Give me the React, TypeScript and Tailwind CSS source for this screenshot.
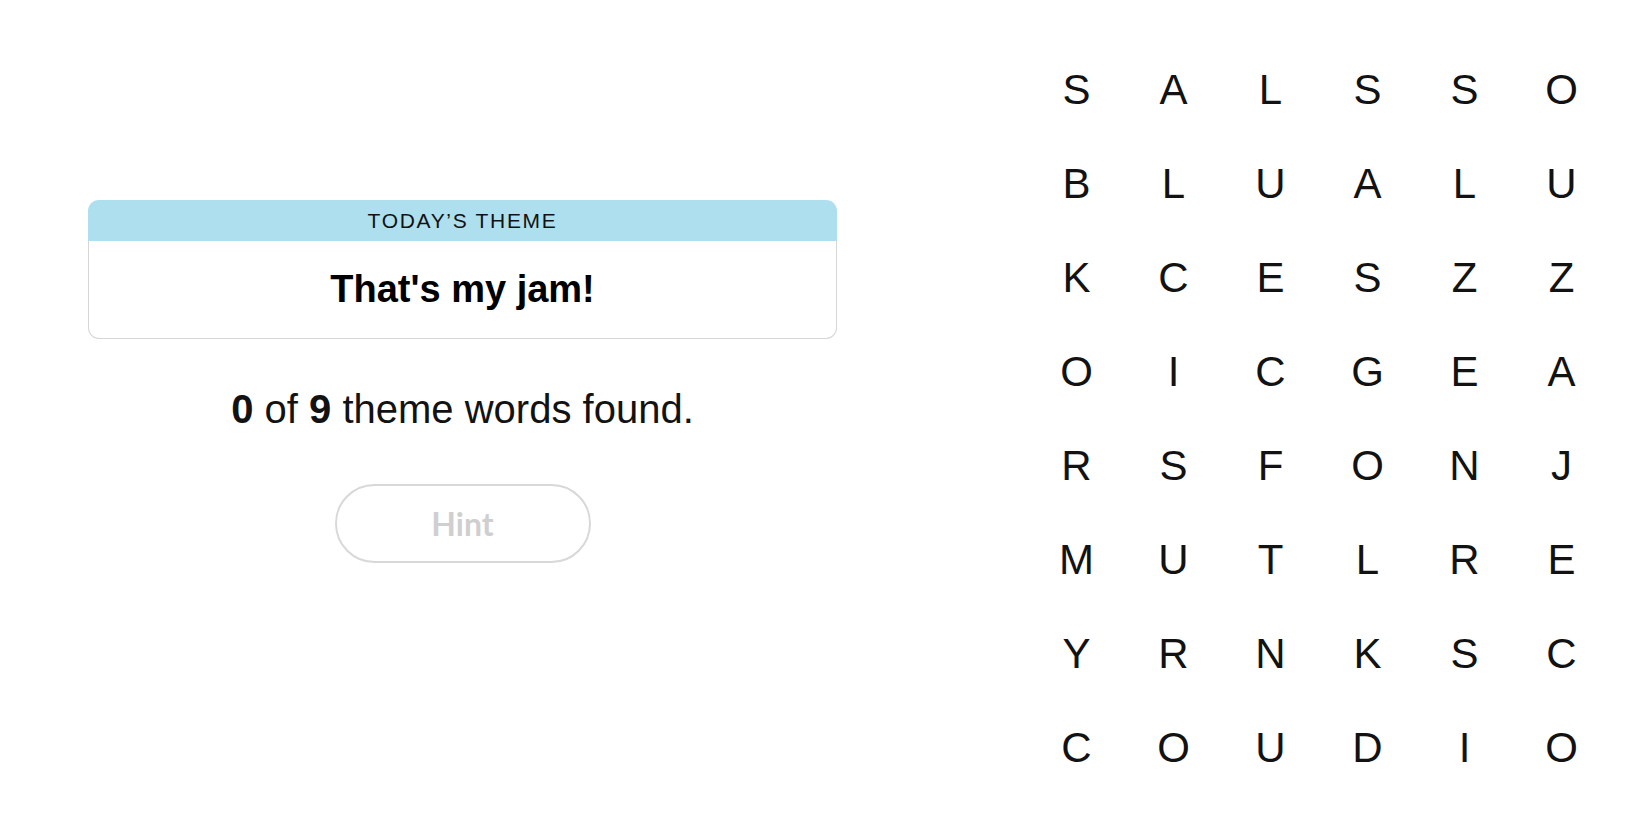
import React from 'react';

const rows = [
  'SALSSO',
  'BLUALU',
  'KCESZZ',
  'OICGEA',
  'RSFONJ',
  'MUTLRE',
  'YRNKSC',
  'COUDIO',
];

export default function App() {
  return (
    <div className="flex h-[825px] w-[1650px] bg-white text-[#121212] font-['Liberation_Sans',Arial,sans-serif]">
      <div className="ml-[88px] mt-[200px] flex w-[749px] flex-col items-center">
        <div className="w-full">
          <div className="flex h-[41px] items-center justify-center rounded-t-[11px] bg-[#aedfee] pt-[1px] text-[21px] tracking-[0.08em]">
            TODAY’S THEME
          </div>
          <div className="flex h-[98px] items-center justify-center rounded-b-[11px] border-x border-b border-[#d6d6d6] bg-white text-[38px] font-bold text-black">
            That's my jam!
          </div>
        </div>
        <p className="mt-[50px] text-[40px] leading-[40px]">
          <span className="font-bold">0</span> of <span className="font-bold">9</span> theme words found.
        </p>
        <button
          type="button"
          disabled
          className="mt-[55px] flex h-[79px] w-[256px] items-center justify-center rounded-full border-2 border-[#d8d8d8] bg-white text-[32px] font-bold text-[#cfcfcf] font-['Lato',sans-serif]"
        >
          Hint
        </button>
      </div>
      <div className="ml-[191px] mt-[42px] grid grid-cols-[repeat(6,97px)] grid-rows-[repeat(8,94px)]">
        {rows.map((row, r) =>
          row.split('').map((ch, c) => (
            <div key={`${r}-${c}`} className="flex items-center justify-center text-[42px]">
              {ch}
            </div>
          ))
        )}
      </div>
    </div>
  );
}
